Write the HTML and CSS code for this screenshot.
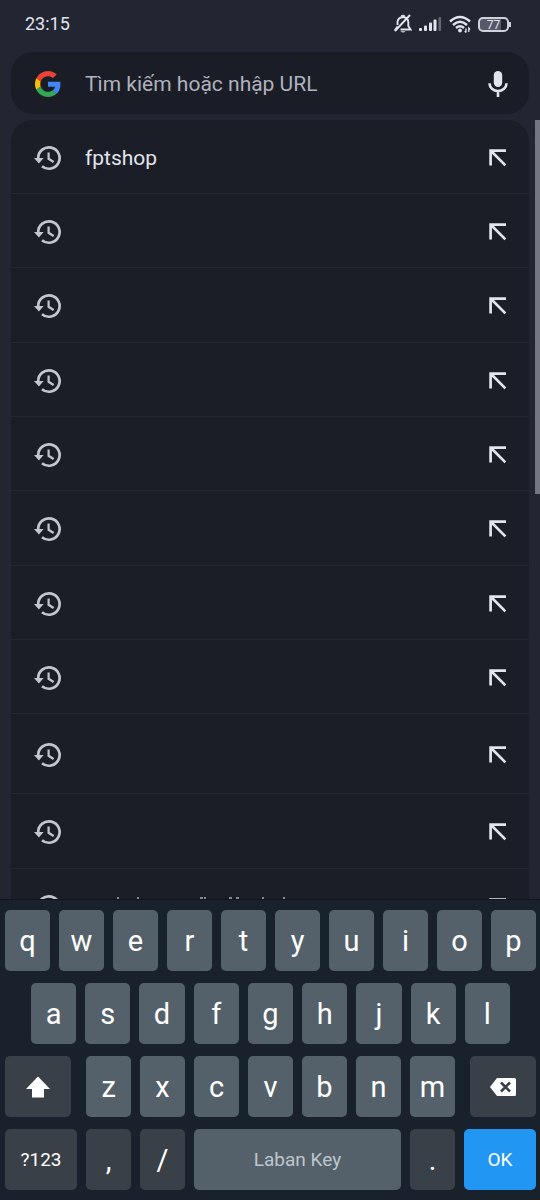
FILE: index.html
```html
<!DOCTYPE html>
<html lang="vi">
<head>
<meta charset="utf-8">
<meta name="viewport" content="width=device-width, initial-scale=1">
<title>Tìm kiếm</title>
<link rel="stylesheet" href="styles.css">
</head>
<body>
<svg class="defs" width="0" height="0" aria-hidden="true">
  <symbol id="history" viewBox="0 0 28 26">
    <path d="M4.200 13A10.700 10.700 0 1 1 8 21.200" fill="none" stroke="currentColor" stroke-width="2.700"/>
    <path d="M0 13h9.600L4.900 18.600z" fill="currentColor"/>
    <path d="M14.600 7.600v6.200l5 3.200" fill="none" stroke="currentColor" stroke-width="2.200"/>
  </symbol>
  <symbol id="insert" viewBox="0 0 18 18">
    <path d="M1.600 16.600V1.600H17M1.800 1.800L16.400 16.400" fill="none" stroke="currentColor" stroke-width="2.700"/>
  </symbol>
</svg>

<header class="status">
  <time class="clock">23:15</time>
  <div class="status-icons">
    <svg width="18" height="20" viewBox="0 0 18 20" aria-label="Im lặng">
      <path d="M3.500 11V8Q4 3.500 9 3Q14 3.500 14.300 8V12L16.500 15.500H6.500M2.500 15.500H1.500L3.500 12.500M7.500 2.500Q9 1 10.500 2.500" fill="none" stroke="currentColor" stroke-width="1.900"/>
      <path d="M6.500 17.200h5q-2.500 2.600-5 0z" fill="currentColor"/>
      <path d="M1 17L16 1" stroke="currentColor" stroke-width="1.900"/>
    </svg>
    <svg width="23" height="16" viewBox="0 0 23 16" aria-label="Sóng">
      <g fill="currentColor"><rect x="0" y="12" width="3" height="3" rx="1"/><rect x="5" y="9.500" width="3" height="5.500" rx="1"/><rect x="10" y="6.500" width="3" height="8.500" rx="1"/><rect x="14.500" y="3.500" width="3" height="11.500" rx="1"/><rect x="19.500" y="1" width="2.600" height="14" rx="1" opacity=".35"/></g>
    </svg>
    <svg width="22" height="18" viewBox="0 0 22 18" aria-label="Wi-Fi">
      <g fill="none" stroke="currentColor" stroke-width="2.500"><path d="M1 6.500Q11-2.500 21 6.500"/><path d="M4 10Q11 3.500 18 10"/><path d="M7 13Q11 9.500 15 13"/></g>
      <circle cx="11" cy="15.500" r="1.900" fill="currentColor"/>
      <path d="M17 13.500v4m-1.200-1.500L17 17.500M19.800 17v-4l1.200 1.500" stroke="currentColor" stroke-width="1.300" fill="none"/>
    </svg>
    <span class="battery">77</span>
  </div>
</header>

<main class="content">
  <form class="search">
    <svg class="lead" width="26" height="26" viewBox="0 0 48 48" aria-hidden="true">
      <path fill="#ea4335" d="M24 9.500c3.540 0 6.710 1.220 9.210 3.600l6.850-6.850C35.900 2.380 30.470 0 24 0 14.620 0 6.510 5.380 2.560 13.220l7.980 6.190C12.430 13.720 17.740 9.500 24 9.500z"/>
      <path fill="#4285f4" d="M46.980 24.550c0-1.570-.15-3.090-.38-4.550H24v9.020h12.940c-.58 2.960-2.260 5.480-4.780 7.180l7.730 6c4.510-4.180 7.090-10.360 7.090-17.650z"/>
      <path fill="#fbbc05" d="M10.530 28.590c-.48-1.450-.76-2.990-.76-4.590s.27-3.140.76-4.590l-7.980-6.190C.92 16.460 0 20.120 0 24c0 3.880.92 7.540 2.560 10.780l7.970-6.190z"/>
      <path fill="#34a853" d="M24 48c6.480 0 11.930-2.130 15.890-5.810l-7.730-6c-2.150 1.450-4.920 2.300-8.160 2.300-6.260 0-11.570-4.220-13.470-9.910l-7.980 6.190C6.510 42.620 14.620 48 24 48z"/>
    </svg>
    <input class="query" type="text" aria-label="Tìm kiếm hoặc nhập URL" placeholder="Tìm kiếm hoặc nhập URL">
    <button class="icon-button" type="button" aria-label="Tìm kiếm bằng giọng nói">
      <svg width="20" height="26" viewBox="0 0 20 26"><rect x="5.800" y="0" width="8.400" height="16" rx="4.200" fill="currentColor"/><path d="M1.500 12.200a8.500 7.800 0 0 0 17 0M10 20v6" fill="none" stroke="currentColor" stroke-width="2.600"/></svg>
    </button>
  </form>

  <div class="suggestions">
    <ul class="list">
      <li class="row"><svg class="history"><use href="#history"/></svg><span class="label">fptshop</span><button class="icon-button" aria-label="Điền fptshop"><svg class="insert"><use href="#insert"/></svg></button></li>
      <li class="row"><svg class="history"><use href="#history"/></svg><span class="label"></span><button class="icon-button" aria-label="Điền"><svg class="insert"><use href="#insert"/></svg></button></li>
      <li class="row"><svg class="history"><use href="#history"/></svg><span class="label"></span><button class="icon-button" aria-label="Điền"><svg class="insert"><use href="#insert"/></svg></button></li>
      <li class="row"><svg class="history"><use href="#history"/></svg><span class="label"></span><button class="icon-button" aria-label="Điền"><svg class="insert"><use href="#insert"/></svg></button></li>
      <li class="row"><svg class="history"><use href="#history"/></svg><span class="label"></span><button class="icon-button" aria-label="Điền"><svg class="insert"><use href="#insert"/></svg></button></li>
      <li class="row"><svg class="history"><use href="#history"/></svg><span class="label"></span><button class="icon-button" aria-label="Điền"><svg class="insert"><use href="#insert"/></svg></button></li>
      <li class="row"><svg class="history"><use href="#history"/></svg><span class="label"></span><button class="icon-button" aria-label="Điền"><svg class="insert"><use href="#insert"/></svg></button></li>
      <li class="row"><svg class="history"><use href="#history"/></svg><span class="label"></span><button class="icon-button" aria-label="Điền"><svg class="insert"><use href="#insert"/></svg></button></li>
      <li class="row tall"><svg class="history"><use href="#history"/></svg><span class="label"></span><button class="icon-button" aria-label="Điền"><svg class="insert"><use href="#insert"/></svg></button></li>
      <li class="row"><svg class="history"><use href="#history"/></svg><span class="label"></span><button class="icon-button" aria-label="Điền"><svg class="insert"><use href="#insert"/></svg></button></li>
      <li class="row"><svg class="history"><use href="#history"/></svg><span class="label"><svg class="marks" width="210" height="20" viewBox="0 0 210 20" aria-hidden="true"><path d="M32 1h2M52 1h2M115 1h3M119 1h2M144 1h3M151 1h3M177 1h2M198 1h2" stroke="currentColor" stroke-width="2"/></svg></span><button class="icon-button" aria-label="Điền"><svg class="insert"><use href="#insert"/></svg></button></li>
    </ul>
    <div class="scroll-thumb"></div>
  </div>
</main>

<section class="keyboard" aria-label="Bàn phím">
  <div class="keys keys-top">
    <button class="key">q</button><button class="key">w</button><button class="key">e</button><button class="key">r</button><button class="key">t</button><button class="key">y</button><button class="key">u</button><button class="key">i</button><button class="key">o</button><button class="key">p</button>
  </div>
  <div class="keys keys-home">
    <button class="key">a</button><button class="key">s</button><button class="key">d</button><button class="key">f</button><button class="key">g</button><button class="key">h</button><button class="key">j</button><button class="key">k</button><button class="key">l</button>
  </div>
  <div class="keys keys-lower">
    <button class="key dark" aria-label="Shift"><svg width="24" height="22" viewBox="0 0 24 22"><path d="M12 0.500L24 13h-6v8.500H6V13H0z" fill="currentColor"/></svg></button>
    <div class="keys keys-letters">
      <button class="key">z</button><button class="key">x</button><button class="key">c</button><button class="key">v</button><button class="key">b</button><button class="key">n</button><button class="key">m</button>
    </div>
    <button class="key dark" aria-label="Xóa"><svg width="26" height="18" viewBox="0 0 26 18"><path d="M7 0H24.500Q26 0 26 1.500V16.500Q26 18 24.500 18H7L0 9z" fill="currentColor"/><path d="M11 4.500l9 9M20 4.500l-9 9" stroke="#394047" stroke-width="2.600"/></svg></button>
  </div>
  <div class="keys keys-bottom">
    <button class="key dark small">?123</button><button class="key dark">,</button><button class="key dark">/</button><button class="key space">Laban Key</button><button class="key dark">.</button><button class="key ok">OK</button>
  </div>
</section>
</body>
</html>
```
FILE: styles.css
```css
* {
  box-sizing: border-box;
}

body {
  display: flex;
  flex-direction: column;
  height: 100vh;
  margin: 0;
  overflow: hidden;
  background: #232532;
  color: #e2e4ee;
  font-family: Roboto, "Noto Sans", sans-serif;
}

button {
  margin: 0;
  padding: 0;
  border: 0;
  background: none;
  color: inherit;
  font: inherit;
}

svg {
  display: block;
  flex: none;
}

.defs {
  position: absolute;
}

.status {
  display: flex;
  flex: none;
  align-items: center;
  justify-content: space-between;
  height: 52px;
  padding: 0 31px 4px 25px;
}

.clock {
  font-size: 18px;
  line-height: 24px;
}

.status-icons {
  display: flex;
  align-items: center;
  gap: 7px;
}

.battery {
  position: relative;
  width: 31px;
  height: 15px;
  border: 2px solid #cfd1dc;
  border-radius: 5px;
  background: linear-gradient(to right, #565869 77%, transparent 77%);
  font-size: 12px;
  line-height: 12px;
  text-align: center;
}

.battery::after {
  content: "";
  position: absolute;
  top: 3px;
  right: -4px;
  width: 2px;
  height: 5px;
  background: #cfd1dc;
}

.content {
  display: flex;
  flex: 1;
  flex-direction: column;
  gap: 6px;
  min-height: 0;
}

.search {
  display: flex;
  flex: none;
  align-items: center;
  height: 62px;
  margin: 0 11px;
  padding: 1px 21px 0 24px;
  border-radius: 22px;
  background: #1a1d26;
}

.query {
  flex: 1;
  min-width: 0;
  margin-left: 24px;
  padding: 0;
  border: 0;
  outline: 0;
  background: none;
  color: #e2e4ee;
  font: 21px/28px Roboto, "Noto Sans", sans-serif;
}

.query::placeholder {
  color: #b0b2bd;
  opacity: 1;
}

.suggestions {
  position: relative;
  flex: 1;
  min-height: 0;
  overflow: hidden;
}

.list {
  margin: 0 11px;
  padding: 0;
  border-radius: 22px 22px 0 0;
  background: #1b1e26;
  list-style: none;
}

.row {
  display: flex;
  align-items: center;
  height: 74px;
  padding: 2px 21px 0 23px;
  border-bottom: 1px solid #242731;
}

.row:nth-child(3n),
.row:nth-child(n + 10) {
  height: 75px;
}

.row.tall {
  height: 80px;
}

.history {
  width: 28px;
  height: 26px;
  color: #c3c6d0;
}

.label {
  flex: 1;
  margin-left: 23px;
  font-size: 21px;
  line-height: 28px;
}

.marks {
  color: #858894;
}

.icon-button {
  display: grid;
  place-items: center;
  flex: none;
  width: 20px;
  height: 28px;
}

.insert {
  width: 18px;
  height: 18px;
}

.scroll-thumb {
  position: absolute;
  top: 0;
  right: 0;
  width: 5px;
  height: 48%;
  background: #747684;
}

.keyboard {
  display: flex;
  flex: none;
  flex-direction: column;
  gap: 12px;
  padding: 10px 4px 10px 5px;
  border-top: 1px solid #10151d;
  background: #18212c;
}

.keys {
  display: grid;
  gap: 9px;
}

.keys-top {
  grid-template-columns: repeat(10, 1fr);
}

.keys-home {
  grid-template-columns: repeat(9, 1fr);
  padding: 0 26px;
}

.keys-lower {
  grid-template-columns: 66fr 368fr 66fr;
  gap: 15px;
}

.keys-letters {
  grid-template-columns: repeat(7, 1fr);
  gap: 9px;
}

.keys-bottom {
  grid-template-columns: 72fr 45fr 45fr 207fr 45fr 72fr;
}

.key {
  display: grid;
  place-items: center;
  min-width: 0;
  height: 61px;
  border-radius: 5px;
  background: #55616a;
  color: #fff;
  font-size: 29px;
  line-height: 34px;
}

.key.dark {
  background: #394047;
}

.key.small {
  font-size: 19px;
}

.key.space {
  color: #bec6cc;
  font-size: 19px;
}

.key.ok {
  background: #2196f3;
  font-size: 19px;
}
```
